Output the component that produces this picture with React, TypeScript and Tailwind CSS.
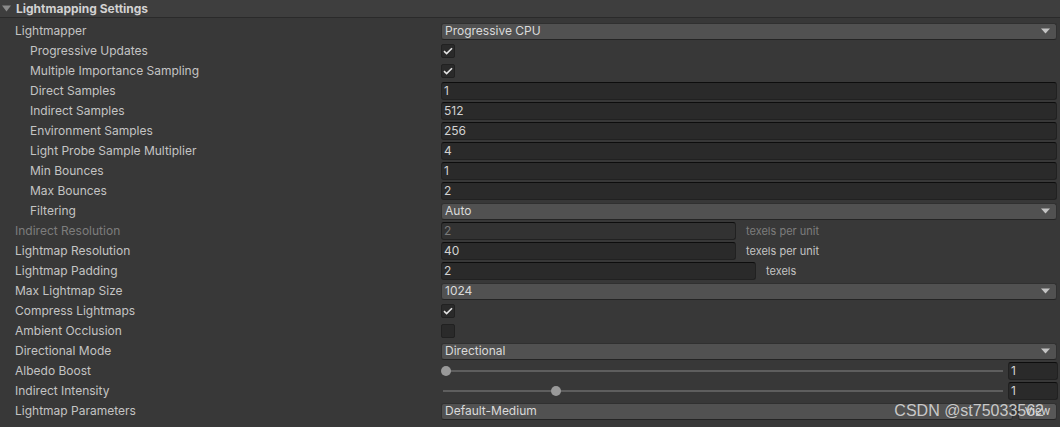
import type { ReactNode } from "react"

const font = { fontFamily: "Inter, 'Noto Sans', 'Liberation Sans', sans-serif" }

function Label({ text, indent, disabled }: { text: string; indent?: boolean; disabled?: boolean }) {
  return (
    <div
      className={
        "w-[441px] shrink-0 whitespace-nowrap leading-[20px] " +
        (indent ? "pl-[30px] " : "pl-[15px] ") +
        (disabled ? "text-[#7d7d7d]" : "text-[#c4c4c4]")
      }
    >
      {text}
    </div>
  )
}

function Row({ children }: { children: ReactNode }) {
  return <div className="flex h-5 items-center text-[12px]">{children}</div>
}

function Arrow() {
  return (
    <svg width="9" height="6" viewBox="0 0 9 6" className="shrink-0">
      <path d="M0 0.5 H9 L4.5 5.5 Z" fill="#c4c4c4" />
    </svg>
  )
}

function Dropdown({ value }: { value: string }) {
  return (
    <div className="flex h-[17px] flex-1 items-center justify-between rounded-[3px] border border-[#303030] border-b-[#242424] bg-[#515151] pl-[3px] pr-[6px] leading-none text-[#dadada]">
      <span>{value}</span>
      <Arrow />
    </div>
  )
}

function Field({ value, disabled, className }: { value: string; disabled?: boolean; className?: string }) {
  return (
    <div
      className={
        "flex h-[18px] items-center rounded-[3px] border border-[#212121] border-t-[#0d0d0d] bg-[#2a2a2a] pl-[2px] leading-none " +
        (disabled ? "text-[#7a7a7a] bg-[#323232] border-[#2a2a2a] " : "text-[#d2d2d2] ") +
        (className ?? "flex-1")
      }
    >
      {value}
    </div>
  )
}

function Check({ on }: { on: boolean }) {
  return (
    <div className="flex h-[14px] w-[14px] items-center justify-center rounded-[2px] border border-[#212121] bg-[#2a2a2a]">
      {on && (
        <svg width="10" height="8" viewBox="0 0 10 8">
          <path d="M1 4.2 L3.6 6.6 L9 1.2" fill="none" stroke="#e4e4e4" strokeWidth="1.6" />
        </svg>
      )}
    </div>
  )
}

function Slider({ pos }: { pos: number }) {
  return (
    <div className="flex flex-1 items-center gap-[5px]">
      <div className="relative h-5 w-[562px]">
        <div className="absolute left-[2px] right-0 top-[9px] h-[2px] bg-[#5e5e5e]" />
        <div
          className="absolute top-[5px] h-[10px] w-[10px] rounded-full bg-[#999999]"
          style={{ left: pos }}
        />
      </div>
      <Field value="1" className="w-[50px]" />
    </div>
  )
}

export default function App() {
  return (
    <div className="h-[427px] w-[1060px] overflow-hidden bg-[#383838]" style={font}>
      {/* Header */}
      <div className="flex h-[18px] items-center border-b border-[#2a2a2a] bg-[#3e3e3e] text-[12px] font-bold text-[#d2d2d2]">
        <svg width="9" height="7" viewBox="0 0 9 7" className="ml-[2px] mr-[5px]">
          <path d="M0 0.5 H9 L4.5 6.5 Z" fill="#8a8a8a" />
        </svg>
        <span>Lightmapping Settings</span>
      </div>

      <div className="pt-[3px] pr-[3px]">
        <Row>
          <Label text="Lightmapper" />
          <Dropdown value="Progressive CPU" />
        </Row>
        <Row>
          <Label text="Progressive Updates" indent />
          <Check on />
        </Row>
        <Row>
          <Label text="Multiple Importance Sampling" indent />
          <Check on />
        </Row>
        <Row>
          <Label text="Direct Samples" indent />
          <Field value="1" />
        </Row>
        <Row>
          <Label text="Indirect Samples" indent />
          <Field value="512" />
        </Row>
        <Row>
          <Label text="Environment Samples" indent />
          <Field value="256" />
        </Row>
        <Row>
          <Label text="Light Probe Sample Multiplier" indent />
          <Field value="4" />
        </Row>
        <Row>
          <Label text="Min Bounces" indent />
          <Field value="1" />
        </Row>
        <Row>
          <Label text="Max Bounces" indent />
          <Field value="2" />
        </Row>
        <Row>
          <Label text="Filtering" indent />
          <Dropdown value="Auto" />
        </Row>
        <Row>
          <Label text="Indirect Resolution" disabled />
          <Field value="2" disabled className="w-[295px]" />
          <span className="ml-[10px] text-[11px] text-[#7d7d7d]">texels per unit</span>
        </Row>
        <Row>
          <Label text="Lightmap Resolution" />
          <Field value="40" className="w-[295px]" />
          <span className="ml-[10px] text-[11px] text-[#c4c4c4]">texels per unit</span>
        </Row>
        <Row>
          <Label text="Lightmap Padding" />
          <Field value="2" className="w-[315px]" />
          <span className="ml-[10px] text-[11px] text-[#c4c4c4]">texels</span>
        </Row>
        <Row>
          <Label text="Max Lightmap Size" />
          <Dropdown value="1024" />
        </Row>
        <Row>
          <Label text="Compress Lightmaps" />
          <Check on />
        </Row>
        <Row>
          <Label text="Ambient Occlusion" />
          <Check on={false} />
        </Row>
        <Row>
          <Label text="Directional Mode" />
          <Dropdown value="Directional" />
        </Row>
        <Row>
          <Label text="Albedo Boost" />
          <Slider pos={0} />
        </Row>
        <Row>
          <Label text="Indirect Intensity" />
          <Slider pos={110} />
        </Row>
        <Row>
          <Label text="Lightmap Parameters" />
          <div className="relative flex flex-1 items-center gap-[5px]">
            <div className="flex h-[17px] flex-1 items-center rounded-[3px] border border-[#303030] border-b-[#242424] bg-[#515151] pl-[3px] leading-none text-[#dadada]">
              Default-Medium
            </div>
            <div className="flex h-[17px] w-[39px] items-center justify-center rounded-[3px] border border-[#303030] border-b-[#242424] bg-[#585858] text-[11px] leading-none text-[#dadada]">
              View
            </div>
            <span
              className="pointer-events-none absolute right-[13px] top-[-2px] text-[16px] leading-[20px] text-[#d8d8d8]/90"
              style={{ fontFamily: "'Liberation Sans', sans-serif" }}
            >
              CSDN @st75033562
            </span>
          </div>
        </Row>
      </div>
    </div>
  )
}
